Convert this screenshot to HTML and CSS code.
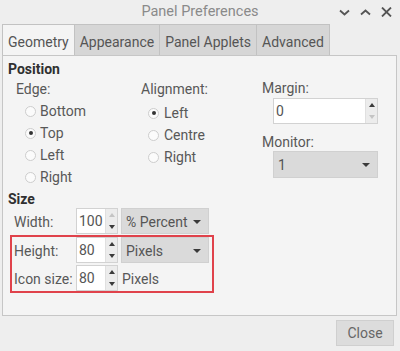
FILE: index.html
```html
<!DOCTYPE html>
<html>
<head>
<meta charset="utf-8">
<link rel="stylesheet" href="styles.css">
</head>
<body>
<div class="window">
  <header class="titlebar">
    <span></span>
    <span class="title">Panel Preferences</span>
    <div class="wm">
      <svg width="11" height="7" viewBox="0 0 11 7"><path d="M1 1.5 L5.5 5.5 L10 1.5" fill="none" stroke="#555" stroke-width="1.8"/></svg>
      <svg width="11" height="7" viewBox="0 0 11 7"><path d="M1 5.5 L5.5 1.5 L10 5.5" fill="none" stroke="#555" stroke-width="1.8"/></svg>
      <svg width="11" height="10" viewBox="0 0 11 10"><path d="M1 0.5 L10 9.5 M10 0.5 L1 9.5" fill="none" stroke="#555" stroke-width="1.8"/></svg>
    </div>
  </header>
  <nav class="tabs">
    <div class="tab active">Geometry</div>
    <div class="tab">Appearance</div>
    <div class="tab">Panel Applets</div>
    <div class="tab">Advanced</div>
  </nav>
  <section class="panel">
    <h3 class="sec">Position</h3>
    <div class="pos-grid">
      <div class="col col-edge">
        <div class="lbl">Edge:</div>
        <ul class="radios">
          <li><span class="radio"></span>Bottom</li>
          <li><span class="radio on"></span>Top</li>
          <li><span class="radio"></span>Left</li>
          <li><span class="radio"></span>Right</li>
        </ul>
      </div>
      <div class="col col-align">
        <div class="lbl">Alignment:</div>
        <ul class="radios">
          <li><span class="radio on"></span>Left</li>
          <li><span class="radio"></span>Centre</li>
          <li><span class="radio"></span>Right</li>
        </ul>
      </div>
      <div class="col col-misc">
        <div class="lbl">Margin:</div>
        <div class="spin wide">
          <span class="val">0</span>
          <span class="btns"><i class="up"></i><i class="down off"></i></span>
        </div>
        <div class="lbl mon">Monitor:</div>
        <div class="combo wide"><span>1</span><i class="caret"></i></div>
      </div>
    </div>
    <h3 class="sec size">Size</h3>
    <div class="row plain">
      <span class="rl">Width:</span>
      <div class="spin"><span class="val">100</span><span class="btns"><i class="up off"></i><i class="down"></i></span></div>
      <div class="combo"><span>% Percent</span><i class="caret"></i></div>
    </div>
    <div class="hl">
      <div class="row">
        <span class="rl">Height:</span>
        <div class="spin"><span class="val">80</span><span class="btns"><i class="up"></i><i class="down"></i></span></div>
        <div class="combo"><span>Pixels</span><i class="caret"></i></div>
      </div>
      <div class="row">
        <span class="rl">Icon size:</span>
        <div class="spin"><span class="val">80</span><span class="btns"><i class="up"></i><i class="down"></i></span></div>
        <span class="unit">Pixels</span>
      </div>
    </div>
  </section>
  <footer class="footer">
    <button class="btn">Close</button>
  </footer>
</div>
</body>
</html>
```
FILE: styles.css
```css
* { box-sizing: border-box; }
body {
  margin: 0;
  background: #eeeeee;
  font-family: Roboto, "Noto Sans", sans-serif;
  font-size: 14px;
  color: #585858;
}
.window { width: 400px; height: 351px; display: flex; flex-direction: column; }

.titlebar {
  height: 24px;
  display: grid;
  grid-template-columns: 1fr auto 1fr;
  align-items: center;
}
.title { font-size: 14.5px; color: #8a8a8a; line-height: 22px; }
.wm {
  justify-self: end;
  display: flex;
  align-items: center;
  gap: 10px;
  padding-right: 8px;
}
.wm svg { display: block; }

.tabs {
  display: flex;
  height: 32px;
  padding-left: 2px;
  margin-bottom: -1px;
}
.tab {
  padding: 2px 5px 0;
  line-height: 30px;
  background: #d6d6d6;
  border: 1px solid #c2c2c2;
  border-left: none;
  color: #555;
  white-space: nowrap;
}
.tab:first-child { border-left: 1px solid #c2c2c2; }
.tab.active { background: #f4f4f4; border-bottom-color: #f4f4f4; }

.panel {
  margin: 0 3px 0 2px;
  height: 261px;
  border: 1px solid #c6c6c6;
  background: #f4f4f4;
  padding-left: 5px;
}
.sec {
  margin: 4px 0 0;
  font-size: 14px;
  line-height: 18px;
  font-weight: bold;
  color: #303030;
}
.sec.size { margin-top: 2px; }

.pos-grid {
  display: grid;
  grid-template-columns: 133px 121px 1fr;
  margin-top: 1px;
}
.lbl { line-height: 20px; }
.col-edge .lbl { padding-left: 8px; }
.radios { list-style: none; margin: 0; padding: 0; }
.radios li { height: 22px; display: flex; align-items: center; }
.col-edge .radios { padding-left: 17px; padding-top: 1px; }
.col-edge .radio { margin-right: 4px; }
.col-align .radios { padding-left: 7px; padding-top: 3px; }
.col-align .radio { margin-right: 5px; }
.radio {
  width: 11px; height: 11px;
  border-radius: 50%;
  border: 1px solid #cdcdcd;
  background: #fbfbfb;
  display: flex; align-items: center; justify-content: center;
}
.radio.on::after {
  content: "";
  width: 4px; height: 4px;
  border-radius: 50%;
  background: #333;
}

.col-misc .spin, .col-misc .combo { margin-left: 11px; }
.col-misc .lbl:first-child { line-height: 19px; }
.lbl.mon { margin-top: 9px; line-height: 18px; }

.spin {
  display: flex;
  width: 42px;
  height: 26px;
  border: 1px solid #d2d2d2;
  background: #fff;
}
.spin.wide { width: 105px; }
.spin .val { flex: 1; padding-left: 2px; line-height: 25px; color: #555; }
.btns {
  width: 12px;
  background: #ececec;
  border-left: 1px solid #e0e0e0;
  display: flex; flex-direction: column;
}
.btns i { flex: 1; display: flex; align-items: center; justify-content: center; }
.btns i::before { content: ""; border-left: 3.5px solid transparent; border-right: 3.5px solid transparent; }
.btns .up::before { border-bottom: 4px solid #3a3a3a; }
.btns .down::before { border-top: 4px solid #3a3a3a; }
.btns .up.off::before { border-bottom-color: #c4c4c4; }
.btns .down.off::before { border-top-color: #c4c4c4; }

.combo {
  width: 88px;
  height: 26px;
  background: #dadada;
  border: 1px solid #d0d0d0;
  display: flex; align-items: center; justify-content: space-between;
  padding: 1px 7px 0 4px;
  color: #555;
}
.combo.wide { width: 105px; height: 27px; }
.caret { border-left: 4px solid transparent; border-right: 4px solid transparent; border-top: 4px solid #3a3a3a; }

.row { display: flex; align-items: center; height: 26px; gap: 3px; }
.row .rl { width: 59px; padding-top: 1px; }
.row.plain { padding-left: 6px; }
.hl {
  margin: 1px 0 0 2px;
  width: 204px;
  border: 2px solid #e0424b;
  padding-left: 2px;
  display: flex; flex-direction: column; gap: 2px;
}
.unit { padding-left: 1px; padding-top: 1px; }

.footer { display: flex; justify-content: flex-end; padding: 4px 6px 0 0; }
.btn {
  width: 58px; height: 26px;
  background: #dcdcdc;
  border: 1px solid #cfcfcf;
  font: inherit;
  color: #666;
  padding: 0;
}
```
